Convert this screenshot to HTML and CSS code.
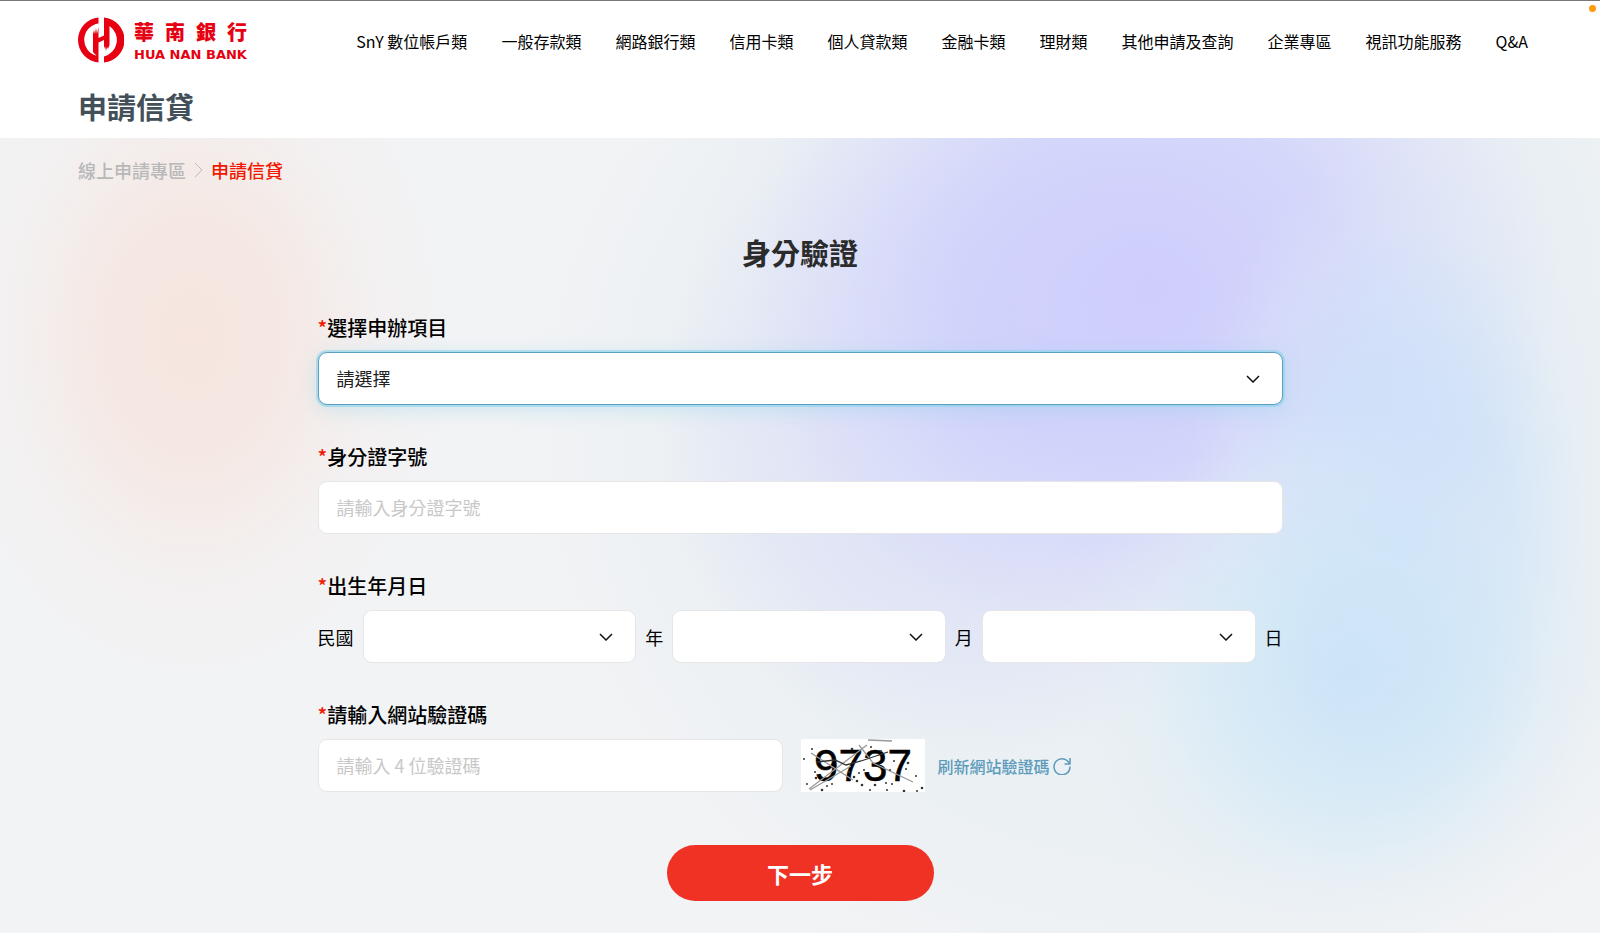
FILE: index.html
```
<!DOCTYPE html>
<html lang="zh-Hant">
<head>
  <meta charset="UTF-8" />
  <meta name="viewport" content="width=device-width, initial-scale=1.0" />
  <title>華南銀行 申請信貸</title>
  <link rel="stylesheet" href="styles.css">
</head>
<body>
  <span class="status-dot"></span>

  <header class="header">
    <div class="header-top">
      <a class="logo" href="#">
        <svg class="logo-mark" viewBox="0 0 46 46" aria-hidden="true">
          <path d="M20.500 0.500A22.600 22.600 0 0 0 20.500 45.500V25.500L26 23V32L27 29L28 34L29 30L30 32L31.500 28V9A17 17 0 0 1 26 39.500V45.500A22.600 22.600 0 0 0 26 0.500V18.500L20.500 21V10L19 17L18 11L17 17L16 13L15 17V35L18.500 38.800A16.500 16.500 0 0 1 20.500 6.500Z" fill="#e60012" />
        </svg>
        <span class="logo-text">
          <span class="logo-zh"><span>華</span><span>南</span><span>銀</span><span>行</span></span>
          <span class="logo-en">HUA NAN BANK</span>
        </span>
      </a>
      <nav class="nav">
        <a href="#">SnY 數位帳戶類</a>
        <a href="#">一般存款類</a>
        <a href="#">網路銀行類</a>
        <a href="#">信用卡類</a>
        <a href="#">個人貸款類</a>
        <a href="#">金融卡類</a>
        <a href="#">理財類</a>
        <a href="#">其他申請及查詢</a>
        <a href="#">企業專區</a>
        <a href="#">視訊功能服務</a>
        <a href="#">Q&amp;A</a>
      </nav>
    </div>
    <h1 class="page-title">申請信貸</h1>
  </header>

  <main class="main">
    <div class="breadcrumb">
      <a href="#">線上申請專區</a>
      <svg width="9" height="16" viewBox="0 0 9 16" aria-hidden="true"><path d="M1 1l7 7-7 7" fill="none" stroke="#bbb" /></svg>
      <span class="current">申請信貸</span>
    </div>

    <form class="form">
      <h2 class="form-title">身分驗證</h2>

      <div class="field">
        <label for="item"><span class="required">*</span>選擇申辦項目</label>
        <div class="select focused">
          <select id="item"><option>請選擇</option></select>
          <svg viewBox="0 0 14 8" aria-hidden="true"><path d="M1 1l6 6 6-6" /></svg>
        </div>
      </div>

      <div class="field">
        <label for="idno"><span class="required">*</span>身分證字號</label>
        <input class="input" id="idno" type="text" placeholder="請輸入身分證字號">
      </div>

      <div class="field">
        <label for="year"><span class="required">*</span>出生年月日</label>
        <div class="date-row">
          <span>民國</span>
          <div class="select">
            <select id="year" aria-label="年"><option></option></select>
            <svg viewBox="0 0 14 8" aria-hidden="true"><path d="M1 1l6 6 6-6" /></svg>
          </div>
          <span>年</span>
          <div class="select">
            <select id="month" aria-label="月"><option></option></select>
            <svg viewBox="0 0 14 8" aria-hidden="true"><path d="M1 1l6 6 6-6" /></svg>
          </div>
          <span>月</span>
          <div class="select">
            <select id="day" aria-label="日"><option></option></select>
            <svg viewBox="0 0 14 8" aria-hidden="true"><path d="M1 1l6 6 6-6" /></svg>
          </div>
          <span>日</span>
        </div>
      </div>

      <div class="field">
        <label for="code"><span class="required">*</span>請輸入網站驗證碼</label>
        <div class="captcha-row">
          <input class="input" id="code" type="text" placeholder="請輸入 4 位驗證碼">
          <svg class="captcha" viewBox="0 0 124 53">
            <rect width="124" height="53" fill="#fff" />
            <text x="13" y="42" class="captcha-text">9737</text>
            <g fill="none" stroke="#999" stroke-width="1.300">
              <path d="M9 51L50 27M10 14L52 41M8 50L66 6M58 6L72 24L112 43M67 1L91 2" />
              <path d="M16 23L34 21L45 26L60 22L87 13" stroke="#333" />
            </g>
            <g fill="#333">
              <circle cx="3" cy="20" r="1" /><circle cx="11" cy="10" r="1" /><circle cx="14" cy="33" r="1" />
              <circle cx="6" cy="45" r="1" /><circle cx="21" cy="51" r="1.300" /><circle cx="26" cy="47" r="1" />
              <circle cx="31" cy="45" r="1" /><circle cx="51" cy="10" r="1.300" /><circle cx="70" cy="8" r="1" />
              <circle cx="53" cy="38" r="1.300" /><circle cx="56" cy="42" r="1.300" /><circle cx="61" cy="46" r="1.300" />
              <circle cx="58" cy="34" r="1" /><circle cx="63" cy="31" r="1" /><circle cx="74" cy="46" r="1.300" />
              <circle cx="69" cy="51" r="1" /><circle cx="86" cy="51" r="1" /><circle cx="85" cy="44" r="1" />
              <circle cx="91" cy="45" r="1" /><circle cx="93" cy="22" r="1" /><circle cx="107" cy="24" r="1.300" />
              <circle cx="105" cy="30" r="1" /><circle cx="115" cy="37" r="1" /><circle cx="103" cy="52" r="1.300" />
              <circle cx="116" cy="52" r="1" /><circle cx="121" cy="49" r="1.300" /><circle cx="15" cy="39" r="1.300" />
              <circle cx="48" cy="33" r="1" /><circle cx="89" cy="31" r="1" /><circle cx="80" cy="12" r="1" />
            </g>
          </svg>
          <button class="refresh" type="button">
            刷新網站驗證碼
            <svg width="18" height="18" viewBox="0 0 18 18" aria-hidden="true"><path d="M16.500 7A8 8 0 1 0 17 9.500M17 1V7H11.500" /></svg>
          </button>
        </div>
      </div>

      <button class="submit" type="submit">下一步</button>
    </form>
  </main>
</body>
</html>
```

FILE: styles.css
```
* {
  margin: 0;
  padding: 0;
  box-sizing: border-box;
}

body {
  font-family: 'Noto Sans CJK TC', sans-serif;
  font-size: 18px;
  color: #000;
  background: #f2f3f5;
  border-top: 1px solid #777;
  min-height: 100vh;
  display: flex;
  flex-direction: column;
}

a {
  color: inherit;
  text-decoration: none;
}

.status-dot {
  position: absolute;
  top: 5px;
  right: 4px;
  width: 7px;
  height: 7px;
  border-radius: 50%;
  background: #ff9a0a;
}

.header {
  background: #fff;
  padding: 16px 72px 10px 78px;
}

.header-top {
  display: flex;
  justify-content: space-between;
  align-items: center;
}

.logo {
  display: flex;
  align-items: center;
  gap: 10px;
  color: #e60012;
}

.logo-mark {
  width: 46px;
  height: 46px;
}

.logo-text {
  display: flex;
  flex-direction: column;
}

.logo-zh {
  display: flex;
  justify-content: space-between;
  font-size: 20px;
  font-weight: 900;
  line-height: 30px;
}

.logo-en {
  font-family: 'DejaVu Sans', sans-serif;
  font-size: 13px;
  font-weight: 700;
  line-height: 16px;
}

.nav {
  display: flex;
  gap: 34px;
  padding-top: 2px;
  font-size: 16px;
  line-height: 24px;
  white-space: nowrap;
}

.page-title {
  margin-top: 22px;
  font-size: 29px;
  line-height: 43px;
  font-weight: 700;
  color: #43505a;
}

.main {
  flex: 1;
  padding: 19px 78px 31px;
  background:
    radial-gradient(ellipse 16% 44% at 12% 25%, rgba(246, 228, 220, 0.9), rgba(246, 229, 222, 0.75) 35%, rgba(245, 234, 229, 0.3) 70%, rgba(244, 239, 237, 0) 100%),
    radial-gradient(ellipse 17% 34% at 84% 68%, rgba(203, 227, 248, 0.85), rgba(208, 232, 247, 0.7) 40%, rgba(222, 236, 246, 0.3) 75%, rgba(235, 240, 246, 0) 100%),
    radial-gradient(ellipse 14% 48% at 88% 48%, rgba(202, 222, 250, 0.9), rgba(206, 226, 249, 0.7) 45%, rgba(222, 236, 246, 0.25) 78%, rgba(235, 240, 246, 0) 100%),
    radial-gradient(ellipse 30% 54% at 72% 19%, rgba(205, 204, 253, 0.95), rgba(207, 208, 252, 0.8) 40%, rgba(217, 220, 249, 0.55) 65%, rgba(230, 235, 244, 0.25) 85%, rgba(236, 241, 244, 0) 100%),
    radial-gradient(ellipse 20% 42% at 61% 36%, rgba(204, 208, 250, 0.75), rgba(210, 212, 250, 0.5) 50%, rgba(230, 236, 245, 0) 100%),
    radial-gradient(ellipse 42% 76% at 74% 36%, rgba(232, 239, 243, 0.9), rgba(232, 239, 243, 0.7) 70%, rgba(242, 243, 245, 0) 100%),
    #f2f3f5;
}

.breadcrumb {
  display: flex;
  align-items: center;
  gap: 8px;
  line-height: 26px;
  font-weight: 500;
  color: #b8b8b8;
}

.breadcrumb .current {
  color: #f01800;
}

.form {
  max-width: 965px;
  margin: 47px auto 0;
  display: flex;
  flex-direction: column;
}

.form-title {
  margin-bottom: 38px;
  font-size: 29px;
  line-height: 44px;
  text-align: center;
  color: #2b2b2b;
}

.field {
  margin-bottom: 36px;
}

.field label {
  display: block;
  padding-bottom: 8px;
  font-size: 20px;
  line-height: 32px;
  font-weight: 500;
}

.required {
  color: #f01800;
}

.input,
.select select {
  display: block;
  width: 100%;
  height: 53px;
  padding: 0 18px 2px;
  border: 1px solid #e6e6e6;
  border-radius: 9px;
  background: #fff;
  font: inherit;
  color: #222;
  outline: none;
}

.input::placeholder {
  color: #c8c8c8;
}

.select {
  flex: 1;
  position: relative;
}

.select select {
  appearance: none;
}

.select svg {
  position: absolute;
  top: 23px;
  right: 23px;
  width: 14px;
  height: 8px;
  fill: none;
  stroke: #111;
  stroke-width: 1.5;
  pointer-events: none;
}

.focused select {
  border-color: #5a9fc0;
  box-shadow: 0 0 0 2px rgba(140, 210, 235, 0.6), 0 4px 20px rgba(140, 210, 235, 0.4);
}

.date-row {
  display: flex;
  align-items: center;
  gap: 9px;
}

.captcha-row {
  display: flex;
  align-items: center;
}

.captcha-row .input {
  flex: 0 1 465px;
}

.captcha {
  flex-shrink: 0;
  width: 124px;
  height: 53px;
  margin: 0 13px 0 18px;
}

.captcha-text {
  font-family: 'Liberation Sans', sans-serif;
  font-size: 44px;
  stroke: #000;
  stroke-width: 0.5;
}

.refresh {
  display: flex;
  align-items: center;
  gap: 3px;
  border: none;
  background: none;
  font: inherit;
  font-size: 16px;
  font-weight: 500;
  color: #5d9bbb;
  white-space: nowrap;
  cursor: pointer;
}

.refresh svg {
  fill: none;
  stroke: #5d9bbb;
  stroke-width: 1.5;
}

.submit {
  align-self: center;
  width: 267px;
  height: 56px;
  margin-top: 17px;
  border: none;
  border-radius: 28px;
  background: #ef3224;
  color: #fff;
  font: inherit;
  font-size: 22px;
  font-weight: 700;
  cursor: pointer;
}
```
